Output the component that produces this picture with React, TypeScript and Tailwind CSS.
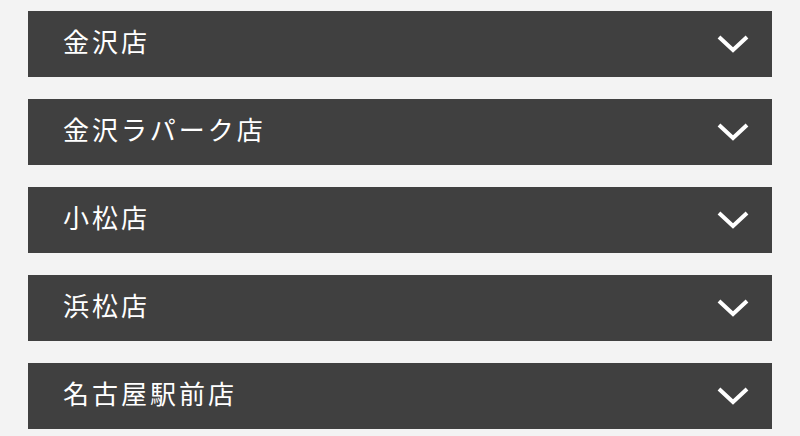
const stores = ['金沢店', '金沢ラパーク店', '小松店', '浜松店', '名古屋駅前店'];

function Chevron() {
  return (
    <svg width="34" height="20" viewBox="0 0 34 20" fill="none" className="shrink-0">
      <path d="M3 3 L17 16 L31 3" stroke="white" strokeWidth="4" strokeLinecap="butt" strokeLinejoin="miter" />
    </svg>
  );
}

export default function App() {
  return (
    <div className="min-h-[436px] bg-[#f3f3f3] px-[28px] pt-[11px]" style={{ fontFamily: '"Noto Sans CJK JP", "Noto Sans", sans-serif' }}>
      <div className="flex flex-col gap-[22px]">
        {stores.map((name) => (
          <button
            key={name}
            className="flex h-[66px] w-full items-center justify-between bg-[#404040] pl-[35px] pr-[22px] text-left"
          >
            <span className="pb-[6px] text-[26px] leading-none tracking-[3px] text-white">{name}</span>
            <Chevron />
          </button>
        ))}
      </div>
    </div>
  );
}
